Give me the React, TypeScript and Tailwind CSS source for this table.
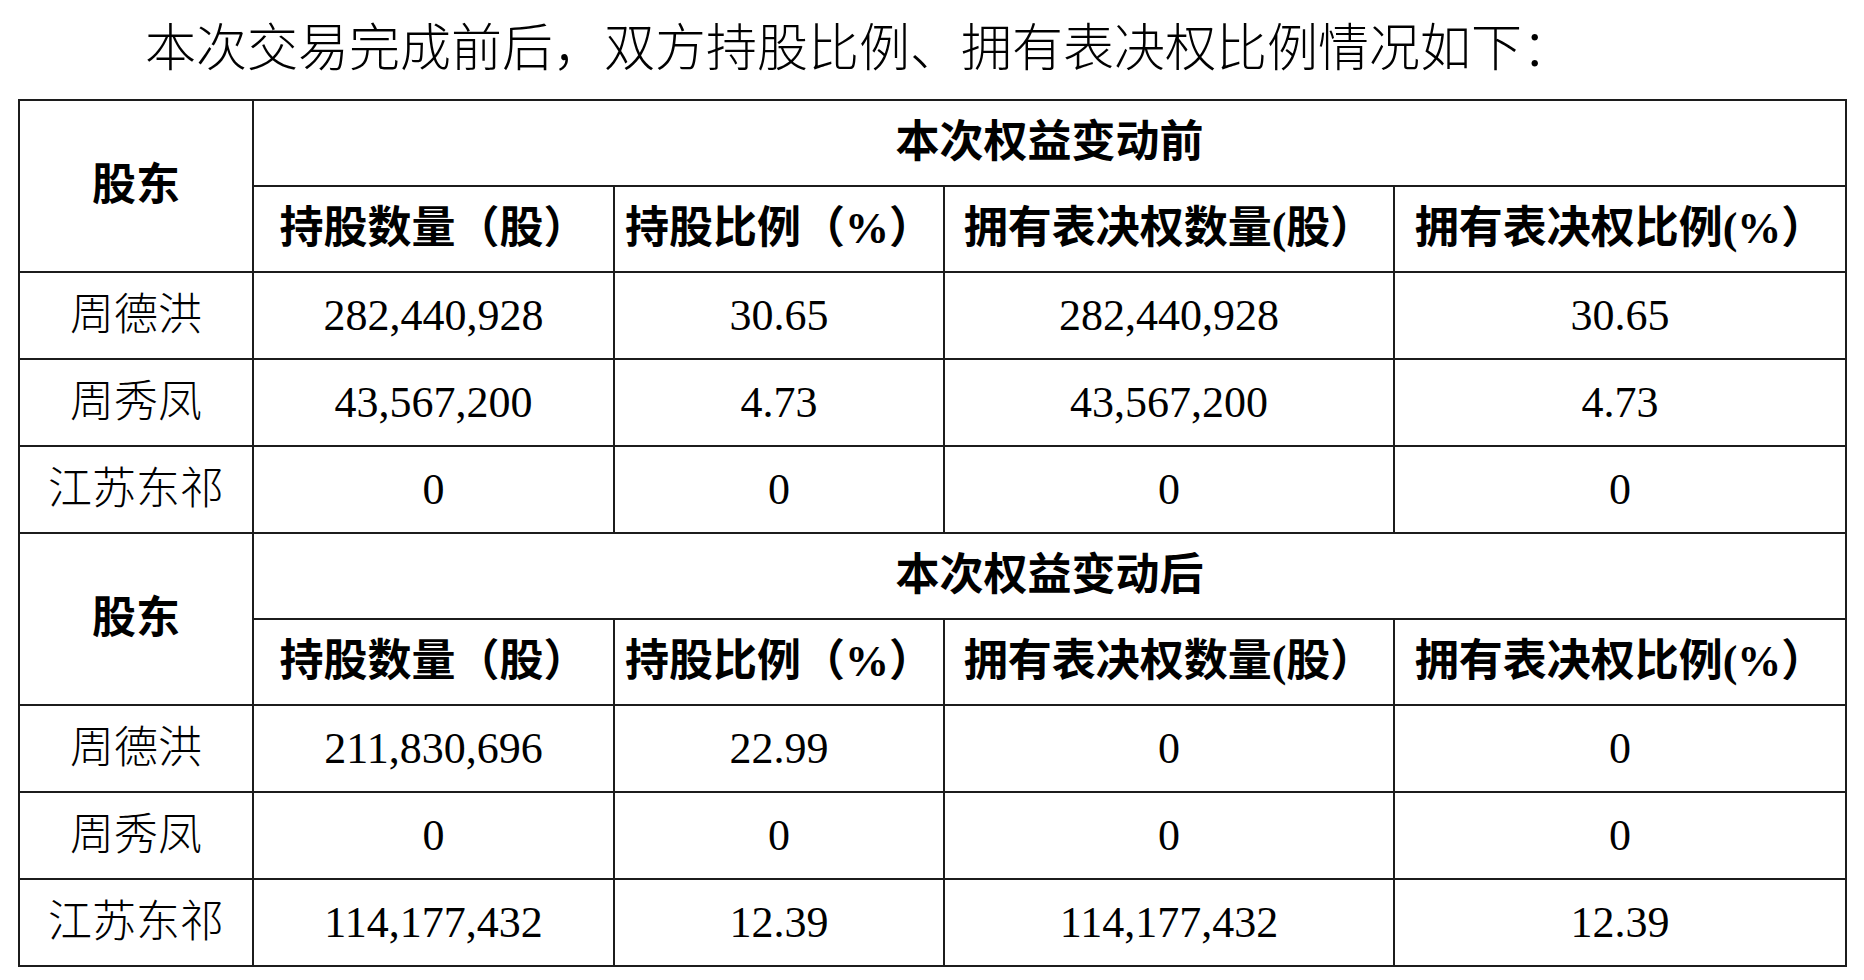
import React from 'react'

const font = { fontFamily: '"Liberation Serif", "Noto Sans CJK SC", serif' }

type Block = {
  title: string
  rows: { name: string; values: string[] }[]
}

const heads = ['持股数量（股）', '持股比例（%）', '拥有表决权数量(股）', '拥有表决权比例(%）']

const blocks: Block[] = [
  {
    title: '本次权益变动前',
    rows: [
      { name: '周德洪', values: ['282,440,928', '30.65', '282,440,928', '30.65'] },
      { name: '周秀凤', values: ['43,567,200', '4.73', '43,567,200', '4.73'] },
      { name: '江苏东祁', values: ['0', '0', '0', '0'] },
    ],
  },
  {
    title: '本次权益变动后',
    rows: [
      { name: '周德洪', values: ['211,830,696', '22.99', '0', '0'] },
      { name: '周秀凤', values: ['0', '0', '0', '0'] },
      { name: '江苏东祁', values: ['114,177,432', '12.39', '114,177,432', '12.39'] },
    ],
  },
]

const cell = 'border-2 border-[#1c1c1c] text-center align-middle whitespace-nowrap p-0 leading-none'

export default function App() {
  return (
    <div className="w-[1864px] h-[980px] bg-white text-black" style={font}>
      <div className="h-[99px] pt-[24px] pl-[145px] text-[51px] leading-[50px] font-light whitespace-nowrap">
        本次交易完成前后，双方持股比例、拥有表决权比例情况如下：
      </div>
      <table className="ml-[18px] border-collapse table-fixed text-[44px]">
        <colgroup>
          <col className="w-[234px]" />
          <col className="w-[361px]" />
          <col className="w-[330px]" />
          <col className="w-[450px]" />
          <col className="w-[452px]" />
        </colgroup>
        <tbody>
          {blocks.map((b) => (
            <React.Fragment key={b.title}>
              <tr className="h-[86px]">
                <td rowSpan={2} className={`${cell} font-bold`}>股东</td>
                <td colSpan={4} className={`${cell} font-bold`}>{b.title}</td>
              </tr>
              <tr className="h-[86px]">
                {heads.map((h) => (
                  <td key={h} className={`${cell} font-bold`}>{h}</td>
                ))}
              </tr>
              {b.rows.map((r) => (
                <tr key={r.name} className="h-[87px]">
                  <td className={`${cell} font-light`}>{r.name}</td>
                  {r.values.map((v, i) => (
                    <td key={i} className={`${cell} font-normal font-['Liberation_Serif',serif]`}>{v}</td>
                  ))}
                </tr>
              ))}
            </React.Fragment>
          ))}
        </tbody>
      </table>
    </div>
  )
}
